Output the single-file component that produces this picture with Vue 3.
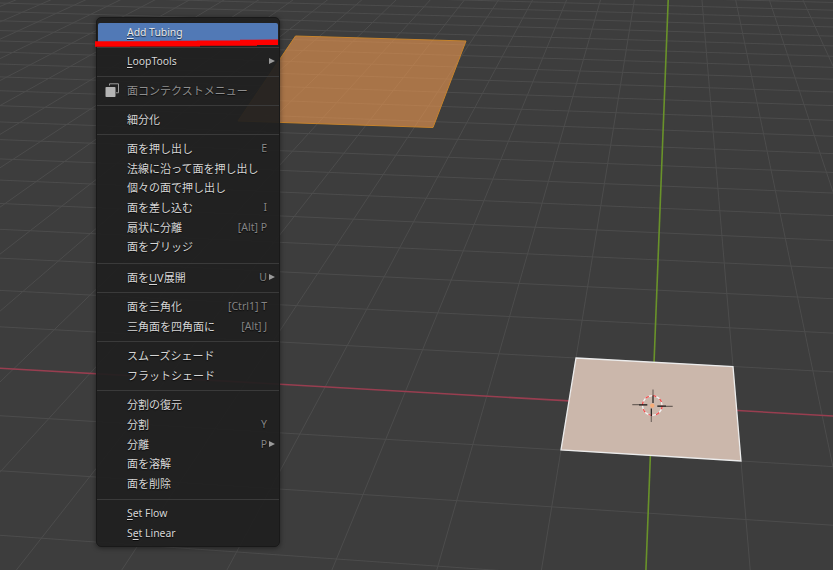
<script setup>
import { computed } from 'vue'

// 選択面の四隅 (画面座標) からグリッドの射影を求める
const quad = [
  [576, 358],
  [733, 366.5],
  [741, 461],
  [561, 450]
]

const homography = () => {
  const [[x0, y0], [x1, y1], [x2, y2], [x3, y3]] = quad
  const sx = x0 - x1 + x2 - x3
  const sy = y0 - y1 + y2 - y3
  const dx1 = x1 - x2
  const dx2 = x3 - x2
  const dy1 = y1 - y2
  const dy2 = y3 - y2
  const den = dx1 * dy2 - dy1 * dx2
  const g = (sx * dy2 - dx2 * sy) / den
  const h = (dx1 * sy - sx * dy1) / den
  return { a: x1 - x0 + g * x1, b: x3 - x0 + h * x3, c: x0, d: y1 - y0 + g * y1, e: y3 - y0 + h * y3, f: y0, g, h }
}

const m = homography()

// world: 面は u,v とも -1..1
const project = (u, v) => {
  const s = (u + 1) / 2
  const t = (1 - v) / 2
  const w = m.g * s + m.h * t + 1
  return [(m.a * s + m.b * t + m.c) / w, (m.d * s + m.e * t + m.f) / w]
}

const segment = (a, b) => ({ x1: a[0], y1: a[1], x2: b[0], y2: b[1] })

const range = (from, to) => Array.from({ length: to - from + 1 }, (_, i) => from + i)

const gridLines = computed(() => {
  const lines = []
  for (const u of range(-60, 60)) {
    if (u !== 0) lines.push(segment(project(u, -6), project(u, 60)))
  }
  for (const v of range(-6, 60)) {
    if (v !== 0) lines.push(segment(project(-60, v), project(60, v)))
  }
  return lines
})

const axisX = segment(project(-60, 0), project(60, 0))
const axisY = segment(project(0, -6), project(0, 60))

const facePoints = quad.map((p) => p.join(',')).join(' ')

const menuGroups = [
  [{ label: 'Add Tubing', key: 0, active: true }],
  [{ label: 'LoopTools', key: 0, sub: true }],
  [{ label: '面コンテクストメニュー', title: true }],
  [{ label: '細分化' }],
  [
    { label: '面を押し出し', shortcut: 'E' },
    { label: '法線に沿って面を押し出し' },
    { label: '個々の面で押し出し' },
    { label: '面を差し込む', shortcut: 'I' },
    { label: '扇状に分離', shortcut: '[Alt] P' },
    { label: '面をブリッジ' }
  ],
  [{ label: '面をUV展開', key: 2, shortcut: 'U', sub: true }],
  [
    { label: '面を三角化', shortcut: '[Ctrl1] T' },
    { label: '三角面を四角面に', shortcut: '[Alt] J' }
  ],
  [{ label: 'スムーズシェード' }, { label: 'フラットシェード' }],
  [
    { label: '分割の復元' },
    { label: '分割', shortcut: 'Y' },
    { label: '分離', shortcut: 'P', sub: true },
    { label: '面を溶解' },
    { label: '面を削除' }
  ],
  [
    { label: 'Set Flow', key: 0 },
    { label: 'Set Linear', key: 1 }
  ]
]

const before = (item) => (item.key === undefined ? item.label : item.label.slice(0, item.key))
const keyChar = (item) => (item.key === undefined ? '' : item.label[item.key])
const after = (item) => (item.key === undefined ? '' : item.label.slice(item.key + 1))
const isLatin = (item) => /^[\x20-\x7e]+$/.test(item.label)

// 行数の多いグループの後ろは区切りまで少し空く
const separatorStyle = (g) => {
  const rows = menuGroups[g - 1].length
  const extra = rows >= 6 ? 2 : rows === 5 ? 1.4 : rows > 1 ? 0.6 : 0
  return { marginTop: `${4.2 + extra}px` }
}
</script>

<template>
  <div class="viewport">
    <svg class="scene" width="833" height="570" viewBox="0 0 833 570">
      <line v-for="(l, i) in gridLines" :key="i" v-bind="l" class="grid-line" />
      <line v-bind="axisX" class="axis-x" />
      <line v-bind="axisY" class="axis-y" />

      <polygon points="295.5,36 466,41 433,127.5 238,121" class="plane-other" />
      <polygon points="295.5,36 466,41 433,127.5 238,121" class="plane-other-edge" />

      <polygon :points="facePoints" class="face" />

      <!-- 3D cursor -->
      <g class="cursor">
        <circle cx="652.3" cy="405.5" r="9.8" class="ring-white" />
        <circle cx="652.3" cy="405.5" r="9.8" class="ring-red" />
        <path d="M632.3 404.6H639M653 389.5V395.5M672.7 406.4H666M651.3 422V416" class="tick-soft" />
        <path d="M639 404.9H647.3M653 395.5V403M666 406.1H657.3M651.3 416V408.5" class="tick-dark" />
        <circle cx="652.3" cy="405.6" r="2.2" class="origin" />
      </g>
    </svg>

    <div class="menu">
      <template v-for="(group, g) in menuGroups" :key="g">
        <div v-if="g > 0" class="separator" :style="separatorStyle(g)"></div>
        <div
          v-for="item in group"
          :key="item.label"
          class="menu-row"
          :class="{ active: item.active, title: item.title, latin: isLatin(item) }"
        >
          <svg v-if="item.title" class="row-icon" width="15" height="15" viewBox="0 0 15 15">
            <path d="M4.5 2.5V0.8H13.5V9.8H11" class="icon-back" />
            <rect x="0.5" y="4" width="10" height="10" rx="0.8" class="icon-front" />
          </svg>
          <span class="label">{{ before(item) }}<u v-if="keyChar(item)">{{ keyChar(item) }}</u>{{ after(item) }}</span>
          <span v-if="item.shortcut" class="shortcut">{{ item.shortcut }}</span>
          <span class="arrow-slot"><i v-if="item.sub" class="arrow"></i></span>
        </div>
      </template>
    </div>

    <!-- スクリーンショット上の赤い書き込み -->
    <svg class="scribble" width="833" height="570" viewBox="0 0 833 570">
      <polygon
        points="95,41.3 160,41.3 160,40.8 197,40.8 197,40.4 240,40.4 240,39.8 278,39.6 278,45 257,45 257,45.8 200,45.8 200,46.4 130,46.4 130,46.8 95,46.8"
        fill="#ff0000"
      />
    </svg>
  </div>
</template>

<style>
html,
body {
  margin: 0;
  background: #3d3d3d;
}
</style>

<style scoped>
.viewport {
  position: relative;
  width: 833px;
  height: 570px;
  overflow: hidden;
  background: #3d3d3d;
}
.scene,
.scribble {
  position: absolute;
  left: 0;
  top: 0;
}
.grid-line {
  stroke: #4c4c4c;
  stroke-width: 1;
}
.axis-x {
  stroke: #983e50;
  stroke-width: 1.6;
}
.axis-y {
  stroke: #69922a;
  stroke-width: 1.6;
}
.plane-other {
  fill: #f09a50;
  fill-opacity: 0.6;
}
.plane-other-edge {
  fill: none;
  stroke: #c6832c;
  stroke-width: 1;
}
.face {
  fill: #cbb7ab;
  stroke: #ececec;
  stroke-width: 1.3;
}
.ring-white {
  fill: none;
  stroke: #f4f4f4;
  stroke-width: 1.3;
}
.ring-red {
  fill: none;
  stroke: #f04848;
  stroke-width: 1.3;
  stroke-dasharray: 3.8 3.9;
}
.tick-soft {
  fill: none;
  stroke: #6e625b;
  stroke-width: 1.1;
}
.tick-dark {
  fill: none;
  stroke: #111;
  stroke-width: 1.1;
}
.origin {
  fill: #f7ad78;
}
.menu {
  position: absolute;
  left: 96px;
  top: 17px;
  width: 184px;
  box-sizing: border-box;
  display: flex;
  flex-direction: column;
  padding: 5px 0 3.4px;
  background: rgba(31, 31, 31, 0.93);
  border: 1px solid #191919;
  border-radius: 5px;
  box-shadow: 0 1px 5px rgba(0, 0, 0, 0.45);
  font-family: 'Noto Sans', 'Noto Sans CJK JP', sans-serif;
  font-size: 11px;
  color: #d6d6d6;
}
.separator {
  height: 1px;
  margin-bottom: 4.2px;
  background: #3a3a3a;
}
.menu-row {
  position: relative;
  display: flex;
  align-items: center;
  box-sizing: border-box;
  height: 19.6px;
  margin: 0 1px;
  padding: 0 3px 1px 29px;
  text-shadow: 0 1px 1px rgba(0, 0, 0, 0.7);
  white-space: nowrap;
}
.menu-row.latin {
  font-size: 10.4px;
}
.menu-row.active {
  background: #5179b6;
  border-radius: 2px 2px 0 0;
  color: #eaeaea;
}
.menu-row.title {
  color: #8e8e8e;
}
.label {
  flex: 1;
}
.label u {
  text-underline-offset: 2px;
}
.shortcut {
  margin-right: 1px;
  font-size: 10.5px;
  color: #848484;
}
.arrow-slot {
  display: flex;
  align-items: center;
  justify-content: flex-end;
  width: 7px;
  height: 8px;
}
.arrow {
  display: block;
  width: 0;
  height: 0;
  border-left: 6px solid #9a9a9a;
  border-top: 3.5px solid transparent;
  border-bottom: 3.5px solid transparent;
}
.row-icon {
  position: absolute;
  left: 6.5px;
  top: 2.5px;
}
.icon-back {
  fill: none;
  stroke: #9c9c9c;
  stroke-width: 1;
}
.icon-front {
  fill: #b4b4b4;
}
</style>
